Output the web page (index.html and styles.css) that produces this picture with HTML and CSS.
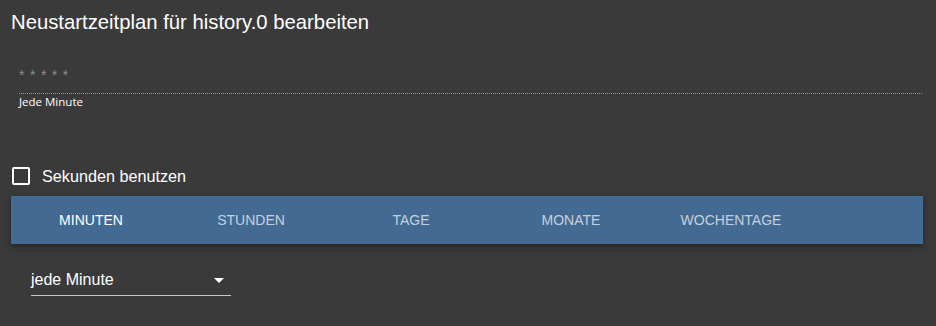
FILE: index.html
```html
<!DOCTYPE html>
<html lang="de">
<head>
<meta charset="utf-8">
<title>Neustartzeitplan</title>
<link rel="stylesheet" href="styles.css">
</head>
<body>
<div class="dialog">
  <h1 class="title">Neustartzeitplan für history.0 bearbeiten</h1>
  <div class="field">
    <div class="cron-input">* * * * *</div>
    <div class="helper">Jede Minute</div>
  </div>
  <label class="check-row">
    <span class="checkbox"></span>
    <span class="check-label">Sekunden benutzen</span>
  </label>
  <div class="tabs">
    <div class="tab active">Minuten</div>
    <div class="tab">Stunden</div>
    <div class="tab">Tage</div>
    <div class="tab">Monate</div>
    <div class="tab">Wochentage</div>
  </div>
  <div class="select-wrap">
    <div class="select">
      <span class="select-value">jede Minute</span>
      <span class="arrow"></span>
    </div>
  </div>
</div>
</body>
</html>
```
FILE: styles.css
```css
html, body {
  margin: 0;
  padding: 0;
  background: #3a3a3a;
}
body {
  font-family: "Liberation Sans", Arial, sans-serif;
  color: #ffffff;
  width: 936px;
  height: 326px;
  overflow: hidden;
}
.dialog {
  display: flex;
  flex-direction: column;
}
.title {
  margin: 0;
  padding: 10px 11px 0;
  font-size: 20.3px;
  line-height: 24px;
  font-weight: normal;
  color: #ffffff;
}
.field {
  margin: 31px 14px 0 19px;
  display: flex;
  flex-direction: column;
}
.cron-input {
  font-size: 14px;
  line-height: 20px;
  padding-bottom: 8px;
  color: #8c8c8c;
  border-bottom: 1px dotted #9a9a9a;
  letter-spacing: 0.8px;
}
.helper {
  margin-top: 1px;
  font-family: "Open Sans", "Noto Sans", sans-serif;
  font-size: 11.5px;
  line-height: 14px;
  color: #ffffff;
}
.check-row {
  margin: 55px 0 0 12px;
  display: flex;
  align-items: center;
  height: 24px;
}
.checkbox {
  width: 14px;
  height: 14px;
  border: 2px solid #ffffff;
  border-radius: 2px;
  margin-right: 12px;
  box-sizing: content-box;
}
.check-label {
  font-size: 16.2px;
  line-height: 24px;
}
.tabs {
  margin: 8px 13px 0 11px;
  height: 48px;
  background: #436a93;
  display: flex;
  box-shadow: 0 2px 4px -1px rgba(0,0,0,0.2), 0 4px 5px 0 rgba(0,0,0,0.14), 0 1px 10px 0 rgba(0,0,0,0.12);
}
.tab {
  width: 160px;
  display: flex;
  align-items: center;
  justify-content: center;
  font-size: 14px;
  text-transform: uppercase;
  color: rgba(255,255,255,0.7);
}
.tab.active {
  color: #ffffff;
}
.select-wrap {
  margin: 24px 0 0 31px;
}
.select {
  width: 200px;
  height: 24px;
  padding-bottom: 3px;
  border-bottom: 1px solid #c8c8c8;
  display: flex;
  align-items: center;
  justify-content: space-between;
}
.select-value {
  font-size: 16px;
  line-height: 24px;
}
.arrow {
  width: 0;
  height: 0;
  border-left: 5px solid transparent;
  border-right: 5px solid transparent;
  border-top: 5px solid #ffffff;
  margin-right: 7px;
  margin-top: 1px;
}
```
